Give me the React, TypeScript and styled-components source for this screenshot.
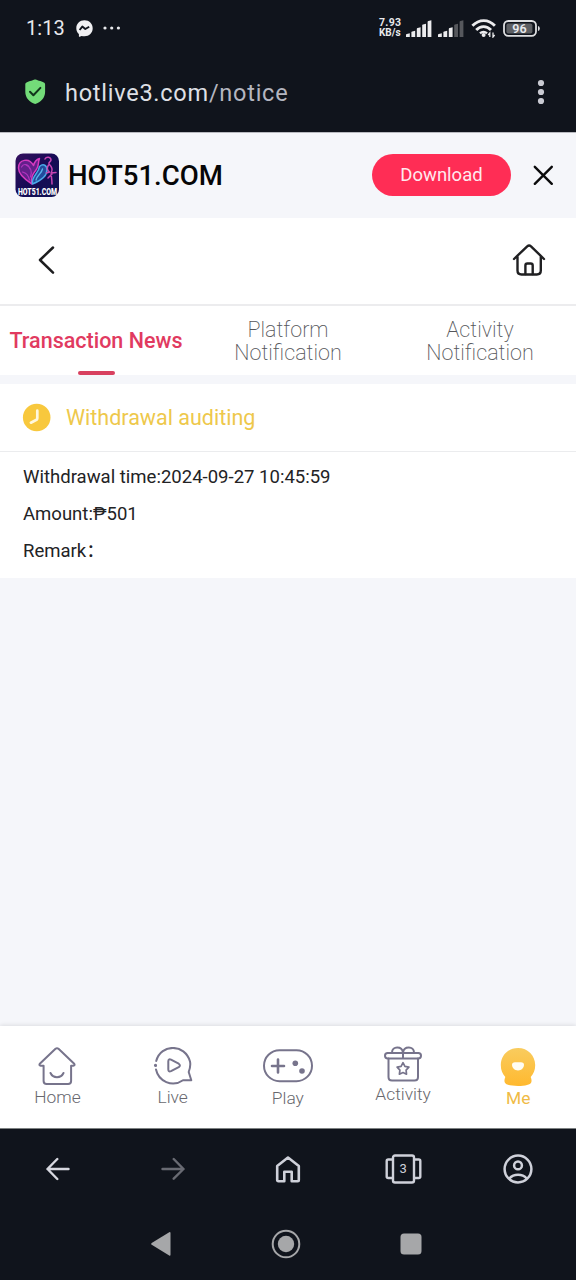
import React from "react";
import styled, { createGlobalStyle } from "styled-components";

const GlobalStyle = createGlobalStyle`
  *, *::before, *::after { box-sizing: border-box; }
  html, body { margin: 0; padding: 0; background: #f5f6fa; }
  body { font-family: Roboto, "Noto Sans CJK SC", sans-serif; }
  svg { display: block; flex: none; }
  button { border: 0; padding: 0; background: none; font: inherit; color: inherit; }
`;

const Screen = styled.div`
  width: 576px;
  height: 1280px;
  display: flex;
  flex-direction: column;
  background: #f5f6fa;
  overflow: hidden;
`;

const StatusBar = styled.header`
  height: 56px;
  flex: none;
  display: flex;
  align-items: center;
  padding: 0 35px 0 26px;
  background: #10141c;
  color: #e8e9ec;
`;

const Clock = styled.span`
  width: 50px;
  font-size: 20px;
  line-height: 24px;
  letter-spacing: 0.1px;
`;

const StatusRight = styled.div`
  margin-left: auto;
  display: flex;
  align-items: center;
`;

const NetSpeed = styled.div`
  width: 27px;
  display: flex;
  flex-direction: column;
  font-size: 10px;
  line-height: 10px;
  font-weight: 700;
  white-space: nowrap;
`;

const NetRate = styled.span`
  height: 10px;
  font-size: 10.5px;
  letter-spacing: 0.3px;
`;

const NetUnit = styled.span`
  height: 10px;
`;

const AddressBar = styled.div`
  height: 76px;
  flex: none;
  display: flex;
  align-items: center;
  padding: 0 30px 5px 24px;
  background: #10141c;
`;

const Url = styled.div`
  margin-left: 18px;
  padding-top: 3px;
  flex: 1;
  font-size: 23.5px;
  line-height: 28px;
  letter-spacing: 0.75px;
  color: #dfe0e6;
`;

const UrlPath = styled.span`
  color: #b4b6c0;
`;

const Banner = styled.section`
  height: 86px;
  flex: none;
  display: flex;
  align-items: center;
  padding: 0 22px 1px 15px;
  border-top: 1px solid #b9bac0;
  background: #f5f6fa;
`;

const BannerTitle = styled.h1`
  margin: 0 0 0 8px;
  padding-top: 2px;
  flex: 1;
  font-size: 27.6px;
  line-height: 34px;
  font-weight: 500;
  color: #060607;
`;

const DownloadButton = styled.button`
  width: 139px;
  height: 42px;
  margin-right: 22px;
  border-radius: 21px;
  background: #ff2d55;
  color: #ffe9ee;
  font-size: 18.5px;
  line-height: 42px;
`;

const PageHeader = styled.nav`
  height: 88px;
  flex: none;
  display: flex;
  align-items: center;
  justify-content: space-between;
  padding: 0 30px 2px 37px;
  background: #fff;
  border-bottom: 2px solid #ececee;
`;

const Tabs = styled.div`
  height: 69px;
  flex: none;
  display: grid;
  grid-template-columns: repeat(3, 1fr);
  background: #fff;
`;

const Tab = styled.div<{ $active?: boolean }>`
  display: flex;
  flex-direction: column;
  align-items: center;
  justify-content: center;
  text-align: center;
  position: relative;
  font-size: ${(p) => (p.$active ? "21.5px" : "21.5px")};
  line-height: 23px;
  font-weight: ${(p) => (p.$active ? 500 : 200)};
  color: ${(p) => (p.$active ? "#e13a60" : "#55565a")};
`;

const TabIndicator = styled.span`
  position: absolute;
  left: 50%;
  bottom: 0;
  width: 37px;
  height: 4px;
  margin-left: -18px;
  border-radius: 2px;
  background: #d8405f;
`;

const NoticeCard = styled.article`
  margin-top: 9px;
  flex: none;
  background: #fff;
`;

const NoticeHead = styled.div`
  height: 68px;
  display: flex;
  align-items: center;
  padding: 0 22px;
  border-bottom: 1px solid #ebecee;
  font-size: 21.5px;
  color: #eec84b;
`;

const NoticeTitle = styled.span`
  margin-left: 15px;
  line-height: 28px;
`;

const NoticeBody = styled.div`
  height: 126px;
  padding: 7px 23px 0;
`;

const NoticeLine = styled.p`
  margin: 0;
  font-size: 18.55px;
  line-height: 37px;
  height: 37px;
  color: #232325;
`;

const BottomTabs = styled.nav`
  height: 102px;
  margin-top: auto;
  flex: none;
  display: grid;
  grid-template-columns: repeat(5, 1fr);
  background: #fff;
  box-shadow: 0 -1px 4px rgba(0, 0, 0, 0.1);
`;

const BottomTab = styled.div<{ $iconTop: number; $labelGap: number; $active?: boolean }>`
  display: flex;
  flex-direction: column;
  align-items: center;
  padding: ${(p) => p.$iconTop}px 0.3px 0 0;
  gap: ${(p) => p.$labelGap}px;
  font-size: 17.4px;
  line-height: 20px;
  font-weight: ${(p) => (p.$active ? 400 : 300)};
  color: ${(p) => (p.$active ? "#f0bb45" : "#68686e")};
`;

const BrowserBar = styled.nav`
  height: 82px;
  flex: none;
  display: grid;
  grid-template-columns: repeat(5, 1fr);
  align-items: center;
  justify-items: center;
  padding-bottom: 1px;
  border-top: 1px solid #7d8182;
  background: #10141c;
  color: #cfd1da;
`;

const TabCount = styled.div`
  display: grid;
  place-items: center;
  font-size: 13px;
  line-height: 14px;

  > * { grid-area: 1 / 1; }
`;

const SystemBar = styled.footer`
  height: 70px;
  flex: none;
  display: flex;
  align-items: center;
  justify-content: center;
  gap: 99px;
  padding: 0 4px 3px 0;
  background: #10141c;
  color: #a6a7a9;
`;

const MessengerIcon = () => (
  <svg width="17" height="17" viewBox="0 0 17 17">
    <path d="M8.500.3C3.800.3.3 3.700.3 8.200c0 2.400 1 4.400 2.600 5.800v2.200c0 .4.4.6.8.5l1.900-.8c.9.3 1.900.4 2.900.4 4.700 0 8.200-3.500 8.200-8C16.700 3.700 13.200.3 8.500.3Z" fill="#f0f0f2" />
    <path d="m3.600 10 2.700-3.400 3 2.400 3.900-2.300" fill="none" stroke="#10141c" strokeWidth="1.900" strokeLinejoin="round" />
  </svg>
);

const DotsSvg = styled.svg`
  margin-left: 10px;
`;

const DotsIcon = () => (
  <DotsSvg width="18" height="4" viewBox="0 0 18 4" fill="#e8e9ec">
    <circle cx="2" cy="2" r="1.600" />
    <circle cx="8.700" cy="2" r="1.600" />
    <circle cx="15.400" cy="2" r="1.600" />
  </DotsSvg>
);

const SignalSvg = styled.svg<{ $gap: number }>`
  margin-right: ${(p) => p.$gap}px;
`;

const Signal = ({ lit, gap }: { lit: number; gap: number }) => (
  <SignalSvg $gap={gap} width="26" height="17" viewBox="0 0 26 17">
    {[3.5, 6, 9.5, 13, 16.5].map((h, i) => (
      <path
        key={h}
        d={`M${i * 5.4} 17v${-h + 1.5}q0-.8.8-1l3-.7V17z`}
        fill={i < lit ? "#ececee" : "#56585d"}
      />
    ))}
  </SignalSvg>
);

const WifiIcon = () => (
  <svg width="26" height="19" viewBox="0 0 26 19" fill="none" stroke="#ececee" strokeWidth="2.800">
    <path d="M1.400 6.800C8-.1 17.500-.1 23.900 6.800M5.200 11c4.300-4.500 10.500-4.500 14.800 0" />
    <path d="M9 14.300c2-1.900 5-1.900 7 0" strokeWidth="2.400" />
    <circle cx="12.600" cy="16" r="2" fill="#ececee" stroke="none" />
    <path d="M18.800 18v-4l-1.600 2M22 13.500V18l1.600-2" strokeWidth="1.300" />
  </svg>
);

const Battery = styled.div`
  display: grid;
  place-items: center start;
  margin-left: 6px;
  font-size: 12.5px;
  line-height: 15px;
  font-weight: 600;

  > * { grid-area: 1 / 1; }
  > span { width: 33px; text-align: center; }
`;

const BatteryLevel = () => (
  <Battery>
    <svg width="38" height="17" viewBox="0 0 38 17">
      <rect x="1" y="1" width="32" height="14.800" rx="4.300" fill="none" stroke="#dedfe1" strokeWidth="1.800" />
      <rect x="3.400" y="3.400" width="26" height="10" rx="2" fill="#5d5f63" />
      <path d="M35 6q1.800.3 1.800 2.500T35 11z" fill="#dedfe1" />
    </svg>
    <span>96</span>
  </Battery>
);

const ShieldIcon = () => (
  <svg width="23" height="26" viewBox="0 0 23 26">
    <path d="M11.200.6c.5 0 6.500 2 8.600 3 .8.4 1.300 1 1.300 1.900v7.500c0 5.700-4.300 10.500-9.900 12C5.600 23.500 1.300 18.700 1.300 13V5.500c0-.9.5-1.500 1.300-1.900 2-1 8-3 8.600-3Z" fill="#73dc79" />
    <path d="m6 12.700 3.400 3.500 7-7.300" fill="none" stroke="#12351c" strokeWidth="2" strokeLinecap="round" strokeLinejoin="round" />
  </svg>
);

const MenuIcon = () => (
  <svg width="10" height="26" viewBox="0 0 10 26" fill="#c9cad2">
    <circle cx="5" cy="4" r="3.100" />
    <circle cx="5" cy="13" r="3.100" />
    <circle cx="5" cy="22" r="3.100" />
  </svg>
);

const AppLogo = () => (
  <svg width="45" height="45" viewBox="0 0 45 45" overflow="visible">
    <defs>
      <linearGradient id="logoBg" x1="0" y1="0" x2="1" y2="1">
        <stop offset="0" stopColor="#35105f" />
        <stop offset=".5" stopColor="#160b55" />
        <stop offset="1" stopColor="#101453" />
      </linearGradient>
    </defs>
    <rect x=".5" y=".5" width="43.500" height="43.500" rx="7.500" fill="url(#logoBg)" />
    <g fill="none" strokeLinecap="round" strokeLinejoin="round">
      <path d="M17 31C9 26 3.500 21 3.500 15c0-8.500 10.500-11 15-2.500 1-4 3-6 6-7-2 5 0 7-3.500 11.500-3 4-5.500 7-4 14Z" fill="#64208b" stroke="#d63bc0" strokeWidth="1.500" />
      <path d="M6.500 14c2-4 7-3 8.500 2M7.500 19c4 1 6 3 7 8M11 12c5 2 6 7 4.500 12" stroke="#b134bf" strokeWidth="1.200" />
      <path d="M17.500 31c-1.500-8 6-10 7-17.500 4-3.500 7.500-1 7.500 3.500 0 6-7 11-14.500 14Z" fill="#234b9b" stroke="#4aa9e8" strokeWidth="1.500" />
      <path d="M21 27c1-5 5.500-6 6.500-11" stroke="#59b4ec" strokeWidth="1.300" />
      <path d="M30 6c1.500-3 6-2 6 1 0 2-3 2-2 4 2 2 4.500 4 2.500 8-1 3 .5 5 .5 12M33.500 12c-2 3-1 5.500 1 7l-3 1M36 20l5-.5M37 21l-4 4" stroke="#c946b4" strokeWidth="1.500" />
    </g>
    <text x="22.500" y="42.300" textAnchor="middle" textLength="39" lengthAdjust="spacingAndGlyphs" fill="#fff" fontSize="8.800" fontWeight="900" fontFamily="Roboto, sans-serif">HOT51.COM</text>
  </svg>
);

const CloseIcon = () => (
  <svg width="21" height="21" viewBox="0 0 21 21" fill="none" stroke="#0b0b0c" strokeWidth="2.400" strokeLinecap="round">
    <path d="m1.800 1.800 17 17M18.800 1.800l-17 17" />
  </svg>
);

const BackChevron = () => (
  <svg width="20" height="30" viewBox="0 0 20 30" fill="none" stroke="#1d1d1f" strokeWidth="2.500" strokeLinecap="round" strokeLinejoin="round">
    <path d="M16 2.500 3 15l13 12.600" />
  </svg>
);

const HouseIcon = () => (
  <svg width="34" height="34" viewBox="0 0 34 34" fill="none" stroke="#202022" strokeWidth="2.400" strokeLinecap="round" strokeLinejoin="round">
    <path d="m2 16 13.200-12.700q1.900-1.600 3.800 0L32 16M5.500 13.500v14q0 4 4 4h15.300q4 0 4-4v-14" />
    <path d="M13.400 31V22.500q0-2 2-2h3.300q2 0 2 2V31" />
  </svg>
);

const ClockIcon = () => (
  <svg width="29" height="29" viewBox="0 0 29 29">
    <circle cx="14.700" cy="14.500" r="13.800" fill="#f8c83d" />
    <path d="M15.300 7.700v7.500q0 1-.8 1.600l-5.600 2.900" fill="none" stroke="#fff8df" strokeWidth="2.700" strokeLinecap="round" strokeLinejoin="round" />
  </svg>
);

const lineIcon = {
  fill: "none",
  stroke: "#77748c",
  strokeWidth: 2,
  strokeLinecap: "round" as const,
  strokeLinejoin: "round" as const,
};

const HomeTabIcon = () => (
  <svg width="38" height="38" viewBox="0 0 38 38" {...lineIcon}>
    <path d="M17.500 1.800q1.500-1.200 3 0l15.700 15q1 1.700-.9 2h-2.200V34q0 3-3 3H8.600q-3 0-3-3V18.800H2.700q-1.900-.3-.9-2Z" />
    <path d="M12.500 26c2.500 5.500 10.500 5.500 13 0" />
  </svg>
);

const LiveTabIcon = () => (
  <svg width="40" height="38" viewBox="0 0 40 38" {...lineIcon}>
    <path d="M3.200 14C8-3.600 32-3.400 37 14.500c.9 4-.2 7.500-1.300 10.500l2.600 8.200H30C19 41 5.500 34 3 22.500" />
    <circle cx="2.500" cy="18.400" r="1" fill="#77748c" strokeWidth="1.200" />
    <path d="M15.300 14.500q0-3 2.700-1.800l7.700 4q2.400 1.700 0 3.400l-7.700 4q-2.700 1.200-2.700-1.800Z" />
  </svg>
);

const PlayTabIcon = () => (
  <svg width="50" height="34" viewBox="0 0 50 34" {...lineIcon}>
    <rect x="1" y="1.200" width="48" height="31" rx="15.500" />
    <path d="M9 17h12M15 10.500v13" strokeWidth="2.600" />
    <g fill="#77748c" stroke="none">
      <circle cx="32.300" cy="14.300" r="2.800" />
      <circle cx="39" cy="22" r="2.800" />
    </g>
  </svg>
);

const GiftTabIcon = () => (
  <svg width="38" height="36" viewBox="0 0 38 36" {...lineIcon}>
    <rect x="1" y="7" width="36" height="5.500" rx="2.700" />
    <path d="M4.500 12.500V31q0 3.500 3.500 3.500h22.500q3.500 0 3.500-3.500V12.500M19 12V6.500M8 6.500c0-6.500 10-6.700 11 0 1-6.700 11-6.500 11 0" />
    <path d="m19 16.700 1.900 3.600 4 .8-2.800 3 .4 4.100-3.500-1.700-3.600 1.700.5-4.100-2.800-3 4-.8Z" strokeWidth="1.700" />
  </svg>
);

const MeTabIcon = () => (
  <svg width="36" height="40" viewBox="0 0 36 40">
    <defs>
      <linearGradient id="meFill" x1="0" y1="0" x2="0" y2="1">
        <stop offset="0" stopColor="#f9cc5e" />
        <stop offset="1" stopColor="#ffb92f" />
      </linearGradient>
    </defs>
    <path d="M18 1C8 1 .8 8.700.8 18c0 5.300 1.700 9 4.500 12-1 2.300-1 4-.6 5.300 1 2.700 6 3.700 13.300 3.700s12.300-1 13.300-3.700c.4-1.300.4-3-.6-5.300 2.800-3 4.500-6.700 4.500-12C35.200 8.700 28 1 18 1Z" fill="url(#meFill)" />
    <path d="M12 17.800q0-2.500 3-2.500h6q3 0 3 2.500c0 3-2.500 5.700-6 5.700s-6-2.700-6-5.700Z" fill="#fffdf3" />
  </svg>
);

const Arrow = ({ forward }: { forward?: boolean }) => (
  <svg width="24" height="24" viewBox="0 0 24 24" fill="none" stroke={forward ? "#696b73" : "#d7d8e0"} strokeWidth="2.400" strokeLinecap="round" strokeLinejoin="round">
    <path d={forward ? "M1.500 12h21M12.700 2l9.800 10-9.800 9.700" : "M22.500 12h-21M11.300 2 1.500 12l9.800 10"} />
  </svg>
);

const BrowserHomeIcon = () => (
  <svg width="26" height="28" viewBox="0 0 26 28" fill="none" stroke="currentColor" strokeWidth="2.600" strokeLinejoin="round">
    <path d="M2.200 11 13 2.500 23.800 11v14q0 1.200-1.200 1.200h-5.900v-9.400H9.300v9.400H3.400q-1.200 0-1.200-1.200Z" />
  </svg>
);

const TabsIcon = () => (
  <svg width="37" height="30" viewBox="0 0 37 30" fill="none" stroke="currentColor" strokeWidth="2.400" strokeLinejoin="round">
    <rect x="8" y="1.500" width="21" height="27" rx="2" />
    <path d="M8 5.500H3.200q-1.500 0-1.500 1.500v15.500Q1.700 24 3.200 24H8M29 5.500h4.800q1.500 0 1.500 1.500v15.500q0 1.500-1.500 1.500H29" />
  </svg>
);

const ProfileIcon = () => (
  <svg width="30" height="30" viewBox="0 0 30 30" fill="none" stroke="currentColor" strokeWidth="2.500">
    <circle cx="15" cy="15" r="13.400" />
    <circle cx="15" cy="11.400" r="3.900" />
    <path d="M6.300 24.500c4.500-5 13-5 17.400 0" />
  </svg>
);

const SystemBack = () => (
  <svg width="22" height="26" viewBox="0 0 22 26">
    <path d="M19.200 1.300q1.300-.6 1.300.8v21.600q0 1.400-1.300.8L1.700 13.800q-1.300-.9 0-1.800Z" fill="currentColor" />
  </svg>
);

const SystemHome = () => (
  <svg width="30" height="30" viewBox="0 0 30 30">
    <circle cx="15" cy="15" r="13.300" fill="none" stroke="currentColor" strokeWidth="2" />
    <circle cx="15" cy="15" r="8.200" fill="currentColor" />
  </svg>
);

const SystemRecent = () => (
  <svg width="22" height="22" viewBox="0 0 22 22">
    <rect x=".5" y=".5" width="21" height="21" rx="3.500" fill="currentColor" />
  </svg>
);

export default function App() {
  return (
    <>
      <GlobalStyle />
      <Screen>
        <StatusBar>
          <Clock>1:13</Clock>
          <MessengerIcon />
          <DotsIcon />
          <StatusRight>
            <NetSpeed>
              <NetRate>7.93</NetRate>
              <NetUnit>KB/s</NetUnit>
            </NetSpeed>
            <Signal lit={5} gap={6} />
            <Signal lit={3} gap={7} />
            <WifiIcon />
            <BatteryLevel />
          </StatusRight>
        </StatusBar>

        <AddressBar>
          <ShieldIcon />
          <Url>
            hotlive3.com<UrlPath>/notice</UrlPath>
          </Url>
          <MenuIcon />
        </AddressBar>

        <Banner>
          <AppLogo />
          <BannerTitle>HOT51.COM</BannerTitle>
          <DownloadButton>Download</DownloadButton>
          <CloseIcon />
        </Banner>

        <PageHeader>
          <BackChevron />
          <HouseIcon />
        </PageHeader>

        <Tabs>
          <Tab $active>
            Transaction News
            <TabIndicator />
          </Tab>
          <Tab>
            Platform
            <br />
            Notification
          </Tab>
          <Tab>
            Activity
            <br />
            Notification
          </Tab>
        </Tabs>

        <NoticeCard>
          <NoticeHead>
            <ClockIcon />
            <NoticeTitle>Withdrawal auditing</NoticeTitle>
          </NoticeHead>
          <NoticeBody>
            <NoticeLine>Withdrawal time:2024-09-27 10:45:59</NoticeLine>
            <NoticeLine>Amount:₱501</NoticeLine>
            <NoticeLine>Remark：</NoticeLine>
          </NoticeBody>
        </NoticeCard>

        <BottomTabs>
          <BottomTab $iconTop={21} $labelGap={2}>
            <HomeTabIcon />
            Home
          </BottomTab>
          <BottomTab $iconTop={21} $labelGap={2}>
            <LiveTabIcon />
            Live
          </BottomTab>
          <BottomTab $iconTop={23} $labelGap={5}>
            <PlayTabIcon />
            Play
          </BottomTab>
          <BottomTab $iconTop={20} $labelGap={2}>
            <GiftTabIcon />
            Activity
          </BottomTab>
          <BottomTab $iconTop={21} $labelGap={1} $active>
            <MeTabIcon />
            Me
          </BottomTab>
        </BottomTabs>

        <BrowserBar>
          <Arrow />
          <Arrow forward />
          <BrowserHomeIcon />
          <TabCount>
            <TabsIcon />
            <span>3</span>
          </TabCount>
          <ProfileIcon />
        </BrowserBar>

        <SystemBar>
          <SystemBack />
          <SystemHome />
          <SystemRecent />
        </SystemBar>
      </Screen>
    </>
  );
}
